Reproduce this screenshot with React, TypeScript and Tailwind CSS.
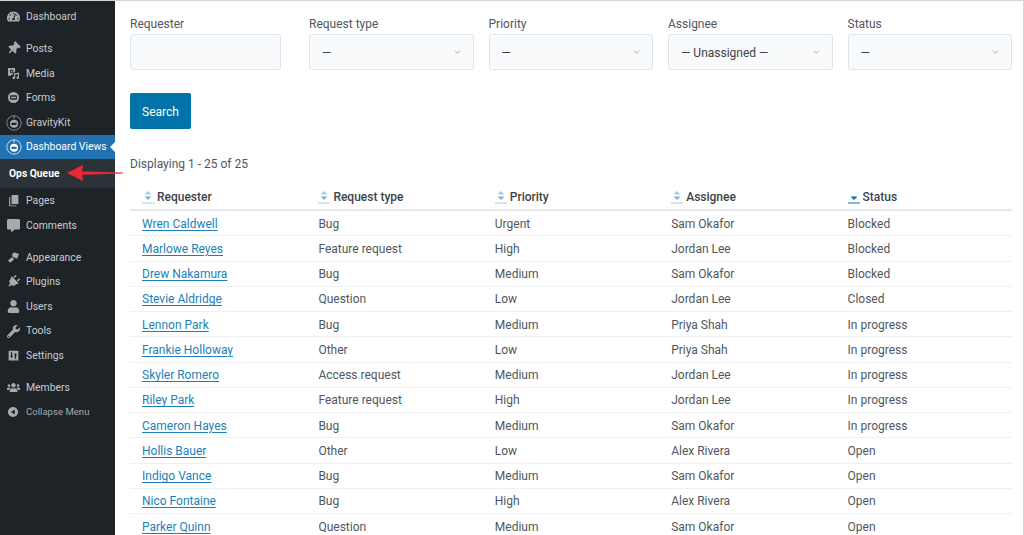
import React from "react";
import {
  FaTachometerAlt,
  FaThumbtack,
  FaPlug,
  FaUser,
  FaWrench,
  FaUsers,
  FaCommentAlt,
} from "react-icons/fa";

const Pin = () => <FaThumbtack className="h-full w-full rotate-45" />;
const Plug = () => <FaPlug className="h-full w-full rotate-45" />;

const Media = () => (
  <svg viewBox="0 0 20 20" className="h-full w-full" fill="currentColor">
    <path
      fillRule="evenodd"
      d="M2.5 1.5h9a1 1 0 0 1 1 1V8H9.5v3.5H7l-1 2H2.5a1 1 0 0 1-1-1v-10a1 1 0 0 1 1-1zM7 4a2.8 2.8 0 1 0 .01 0zm0 1.6a1.2 1.2 0 1 1-.01 0z"
    />
    <path d="M18.5 8.5v8a2 2 0 1 1-1.7-2v-3.6l-4.3 1v4.8a2 2 0 1 1-1.7-2V10z" />
  </svg>
);

const Forms = () => (
  <svg viewBox="0 0 20 20" className="h-full w-full" fill="currentColor">
    <path
      fillRule="evenodd"
      d="M10 1.5a8.5 8.5 0 1 1 0 17 8.5 8.5 0 0 1 0-17zM6 6.5a1.2 1.2 0 0 0-1.2 1.2v4.6A1.2 1.2 0 0 0 6 13.5h8a1.2 1.2 0 0 0 1.2-1.2V7.7A1.2 1.2 0 0 0 14 6.5zm.2 2.3h7.6v2.4H6.2z"
    />
  </svg>
);

const Gravity = ({ strong }: { strong?: boolean }) => (
  <svg viewBox="0 0 20 20" className="h-full w-full" fill="none" stroke="currentColor">
    <circle cx="10" cy="10" r="9" strokeWidth="0.9" />
    <path d="M10 1v3.5" strokeWidth="1" />
    <circle cx="10" cy="11" r="5" fill="currentColor" stroke="none" />
    <rect x="6.5" y="9.6" width="7" height="2.8" rx="1.4" fill={strong ? "#2271b1" : "#1d2327"} stroke="none" />
  </svg>
);

const Pages = () => (
  <svg viewBox="0 0 20 20" className="h-full w-full" fill="currentColor">
    <path d="M7 1.5h10.5v14H7z" />
    <path d="M5 4.5v13h9.5v1.5H3.2V4.5z" />
  </svg>
);

const Brush = () => (
  <svg viewBox="0 0 20 20" className="h-full w-full" fill="currentColor">
    <path d="M11 2l7.5 2.5-3 8.5-1.5-3-1 1.5L11 9.5l-1 1L8 8.5 9 7.5 7 6z" />
    <path d="M7.5 9.5l3.5 3.2-6 5.3-3.5-3.2z" />
  </svg>
);

const Settings = () => (
  <svg viewBox="0 0 20 20" className="h-full w-full" fill="currentColor">
    <path
      fillRule="evenodd"
      d="M2.5 2.5h15v15h-15zM6 5v5.5H4.5L7 14l2.5-3.5H8V5zm6 10V9.5h-1.5L13 6l2.5 3.5H14V15z"
    />
  </svg>
);

const Collapse = () => (
  <svg viewBox="0 0 20 20" className="h-full w-full" fill="currentColor">
    <path fillRule="evenodd" d="M10 1.5a8.5 8.5 0 1 1 0 17 8.5 8.5 0 0 1 0-17zm3 4.2L6.5 10l6.5 4.3z" />
  </svg>
);

const Members = () => <FaUsers className="h-[11px] w-full" />;

type Item = { label: string; Icon: React.ElementType; large?: boolean };

const upperGroups: Item[][] = [
  [{ label: "Dashboard", Icon: FaTachometerAlt }],
  [
    { label: "Posts", Icon: Pin },
    { label: "Media", Icon: Media },
    { label: "Forms", Icon: Forms },
    { label: "GravityKit", Icon: Gravity, large: true },
  ],
];

const lowerGroups: Item[][] = [
  [
    { label: "Pages", Icon: Pages },
    { label: "Comments", Icon: FaCommentAlt },
  ],
  [
    { label: "Appearance", Icon: Brush },
    { label: "Plugins", Icon: Plug },
    { label: "Users", Icon: FaUser },
    { label: "Tools", Icon: FaWrench },
    { label: "Settings", Icon: Settings },
  ],
  [{ label: "Members", Icon: Members }],
];

const MenuItem = ({ label, Icon, large }: Item) => (
  <div className="flex h-[24.6px] items-center text-[10.4px] text-[#c9cccf]">
    <span className="flex w-[26px] shrink-0 justify-center pl-[1px]">
      <span
        className={
          large
            ? "flex h-[16px] w-[16px] items-center justify-center text-[#a7aaad]"
            : "flex h-[13px] w-[13px] items-center justify-center text-[#a7aaad]"
        }
      >
        <Icon className="h-full w-full" />
      </span>
    </span>
    <span>{label}</span>
  </div>
);

const Sidebar = () => (
  <aside className="relative w-[115px] shrink-0 bg-[#1d2327] pt-[3.5px]">
    <div className="mb-[7.4px]">
      {upperGroups[0].map((item) => (
        <MenuItem key={item.label} {...item} />
      ))}
    </div>
    {upperGroups[1].map((item) => (
      <MenuItem key={item.label} {...item} />
    ))}
    <div className="relative flex h-[24.6px] items-center bg-[#2271b1] text-[10.4px] text-white">
      <span className="flex w-[26px] shrink-0 justify-center pl-[1px]">
        <span className="h-[16px] w-[16px]">
          <Gravity strong />
        </span>
      </span>
      <span>Dashboard Views</span>
      <span className="absolute right-0 top-[7px] h-0 w-0 border-y-[5px] border-r-[5px] border-y-transparent border-r-white" />
    </div>
    <div className="flex h-[29px] items-center bg-[#2c3338] pl-[9px] text-[10.3px] font-bold text-white">
      Ops Queue
    </div>
    {lowerGroups.map((group, i) => (
      <div key={i} className={i < 2 ? "mb-[7.4px]" : ""}>
        {group.map((item) => (
          <MenuItem key={item.label} {...item} />
        ))}
      </div>
    ))}
    <div className="flex h-[24px] items-center text-[9.6px] text-[#a7aaad]">
      <span className="ml-[7px] h-[12px] w-[12px]">
        <Collapse />
      </span>
      <span className="ml-[7px]">Collapse Menu</span>
    </div>
    <svg
      viewBox="0 0 60 20"
      className="absolute left-[65px] top-[162px] z-10 h-[20px] w-[60px]"
    >
      <path d="M2 10 L18 2 L17 8.4 L58 9.4 L58 10.6 L17 11.8 L18 18 Z" fill="#ee2737" />
    </svg>
  </aside>
);

const Chevron = () => (
  <svg viewBox="0 0 10 6" className="h-[4px] w-[7px]" fill="none" stroke="#8c9299" strokeWidth="1.1">
    <path d="M1 1l4 4 4-4" />
  </svg>
);

const Field = ({ label, value, className }: { label: string; value?: string; className: string }) => (
  <div className={className}>
    <div className="h-[16px] text-[12px] leading-[16px] text-[#50575e]">{label}</div>
    <div className="mt-[2px] flex h-[36px] items-center justify-between rounded-[3px] border border-[#dfe4ec] bg-[#f9fafb] pl-[12px] pr-[12px] text-[12px] text-[#3c434a]">
      <span className="pt-[1px]">{value}</span>
      {value && <Chevron />}
    </div>
  </div>
);

const SortIcon = ({ active }: { active?: boolean }) => (
  <svg viewBox="0 0 12 14" className="mr-[3px] h-[15px] w-[12px] shrink-0">
    {!active && <path d="M6 0.5l3.5 3.5h-7z" fill="#a9c9e4" />}
    <path d="M2.5 6h7L6 9.5z" fill={active ? "#0073aa" : "#7fb0d6"} />
    <path d="M0 12.5h12" stroke={active ? "#0073aa" : "#a9c9e4"} strokeWidth="1" />
  </svg>
);

const rows = [
  ["Wren Caldwell", "Bug", "Urgent", "Sam Okafor", "Blocked"],
  ["Marlowe Reyes", "Feature request", "High", "Jordan Lee", "Blocked"],
  ["Drew Nakamura", "Bug", "Medium", "Sam Okafor", "Blocked"],
  ["Stevie Aldridge", "Question", "Low", "Jordan Lee", "Closed"],
  ["Lennon Park", "Bug", "Medium", "Priya Shah", "In progress"],
  ["Frankie Holloway", "Other", "Low", "Priya Shah", "In progress"],
  ["Skyler Romero", "Access request", "Medium", "Jordan Lee", "In progress"],
  ["Riley Park", "Feature request", "High", "Jordan Lee", "In progress"],
  ["Cameron Hayes", "Bug", "Medium", "Sam Okafor", "In progress"],
  ["Hollis Bauer", "Other", "Low", "Alex Rivera", "Open"],
  ["Indigo Vance", "Bug", "Medium", "Sam Okafor", "Open"],
  ["Nico Fontaine", "Bug", "High", "Alex Rivera", "Open"],
  ["Parker Quinn", "Question", "Medium", "Sam Okafor", "Open"],
];

const headers = ["Requester", "Request type", "Priority", "Assignee", "Status"];

const App = () => {
  return (
    <div className="flex h-[535px] w-[1024px] overflow-hidden border-r border-t border-[#d4d6d8] bg-white font-['Roboto',sans-serif]">
      <Sidebar />
      <main className="min-w-0 flex-1 overflow-hidden pl-[15px] pr-[11px] pt-[15px]">
        <div className="flex gap-[15px]">
          <Field label="Requester" className="mr-[13px] w-[151px]" />
          <Field label="Request type" value="—" className="w-[164.5px]" />
          <Field label="Priority" value="—" className="w-[164.5px]" />
          <Field label="Assignee" value="— Unassigned —" className="w-[164.5px]" />
          <Field label="Status" value="—" className="w-[164.5px]" />
        </div>
        <button className="mt-[23px] h-[36px] w-[61px] rounded-[2px] bg-[#0073aa] pt-[1px] text-[12px] text-white">
          Search
        </button>
        <p className="mt-[26.5px] text-[12px] leading-[16px] text-[#50575e]">Displaying 1 - 25 of 25</p>
        <div className="mt-[13.5px] w-[882px] text-[12px] text-[#50575e]">
          <div className="grid h-[26px] grid-cols-5 items-center border-b-2 border-[#e6e8eb]">
            {headers.map((h) => (
              <div key={h} className="flex items-center pl-[12px] font-medium text-[#3c434a]">
                <SortIcon active={h === "Status"} />
                {h}
              </div>
            ))}
          </div>
          {rows.map((row) => (
            <div key={row[0]} className="grid h-[25.25px] grid-cols-5 items-center border-b border-[#eef0f2] pt-[1px]">
              {row.map((cell, i) => (
                <div key={i} className="pl-[12px]">
                  {i === 0 ? (
                    <a href="#" className="text-[#1e7fb8] underline underline-offset-2">
                      {cell}
                    </a>
                  ) : (
                    cell
                  )}
                </div>
              ))}
            </div>
          ))}
        </div>
      </main>
    </div>
  );
};

export default App;
